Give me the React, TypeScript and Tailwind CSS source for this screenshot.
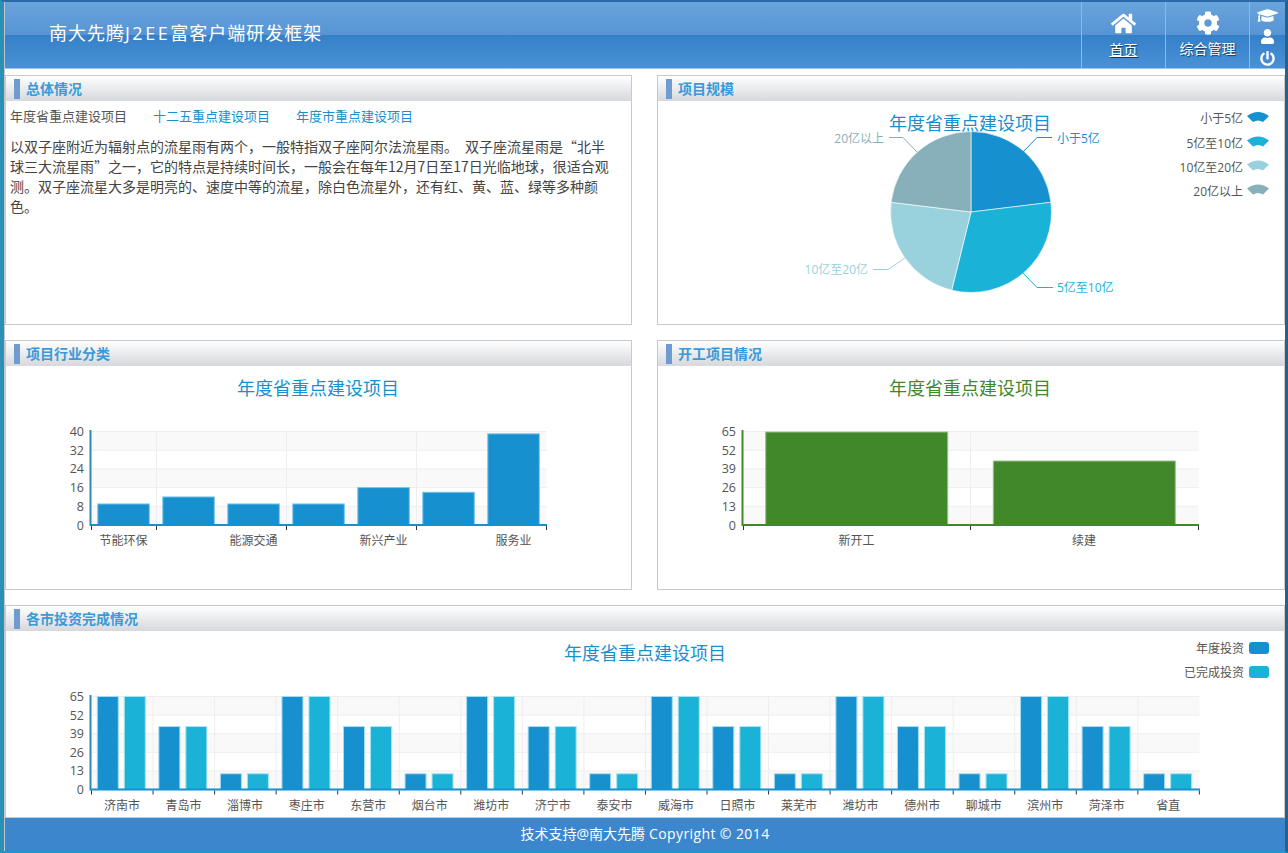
import type { ReactNode } from 'react';
import { FaHome, FaCog, FaGraduationCap, FaUser, FaPowerOff } from 'react-icons/fa';

const BLUE = '#1790cf';
const CYAN = '#1bb2d8';
const GREEN = '#408829';

const pieSlices = [
  { from: 0, to: 83.08, color: BLUE },
  { from: 83.08, to: 193.85, color: CYAN },
  { from: 193.85, to: 276.92, color: '#99d2dd' },
  { from: 276.92, to: 360, color: '#88b0bb' },
];

const pieLabels = [
  { text: '小于5亿', x: 1057, y: 143, anchor: 'start', color: BLUE, line: '1023,152 1037,137.5 1052,137.5' },
  { text: '5亿至10亿', x: 1057, y: 292, anchor: 'start', color: CYAN, line: '1023,273 1037,287.5 1053,287.5' },
  { text: '10亿至20亿', x: 868, y: 274, anchor: 'end', color: '#99d2dd', line: '905,258 888,269.5 873,269.5' },
  { text: '20亿以上', x: 884, y: 143, anchor: 'end', color: '#88b0bb', line: '917,152 903,137.5 889,137.5' },
];

const pieLegend = [
  { text: '小于5亿', y: 119, color: BLUE },
  { text: '5亿至10亿', y: 143.5, color: CYAN },
  { text: '10亿至20亿', y: 167.5, color: '#99d2dd' },
  { text: '20亿以上', y: 191.5, color: '#88b0bb' },
];

const cities = ['济南市', '青岛市', '淄博市', '枣庄市', '东营市', '烟台市', '潍坊市', '济宁市', '泰安市', '威海市', '日照市', '莱芜市', '潍坊市', '德州市', '聊城市', '滨州市', '菏泽市', '省直'];
const cityValues = cities.map((_, i) => [65, 44, 11][i % 3]);

function slicePath(cx: number, cy: number, r: number, from: number, to: number) {
  const p = (a: number) => {
    const rad = (a * Math.PI) / 180;
    return `${cx + r * Math.sin(rad)},${cy - r * Math.cos(rad)}`;
  };
  const large = to - from > 180 ? 1 : 0;
  return `M${cx},${cy} L${p(from)} A${r},${r} 0 ${large} 1 ${p(to)} Z`;
}

interface PlotProps {
  x0: number;
  x1: number;
  top: number;
  bottom: number;
  yLabels: string[];
  ticks: number[];
  color: string;
  axisColor: string;
  children: ReactNode;
}

// grid, bands and axes shared by the three bar charts
const Plot = ({ x0, x1, top, bottom, yLabels, ticks, color, axisColor, children }: PlotProps) => {
  const band = (bottom - top) / 5;
  return (
    <g>
      {[0, 2, 4].map((i) => (
        <rect key={i} x={x0} y={top + band * i} width={x1 - x0} height={band} fill="#f9f9f9" />
      ))}
      {[0, 1, 2, 3, 4].map((i) => (
        <line key={i} x1={x0} x2={x1} y1={top + band * i} y2={top + band * i} stroke="#eeeeee" />
      ))}
      {ticks.slice(1, -1).map((t) => (
        <line key={t} x1={t} x2={t} y1={top} y2={bottom} stroke="#eeeeee" />
      ))}
      {yLabels.map((l, i) => (
        <text key={l} x={x0 - 7.5} y={top + band * i + 4.5} textAnchor="end" fontSize="12.5" fill="#555555">
          {l}
        </text>
      ))}
      {children}
      <line x1={x0 - 1} x2={x1 + 0.5} y1={bottom} y2={bottom} stroke={color} strokeWidth="2" />
      <line x1={x0 - 1} x2={x0 - 1} y1={top - 1.5} y2={bottom + 1} stroke={axisColor} strokeWidth="2" />
      {ticks.map((t) => (
        <line key={t} x1={t} x2={t} y1={bottom + 1} y2={bottom + 5} stroke="#333333" />
      ))}
    </g>
  );
};

const Panel = ({ title, children, className = '' }: { title: string; children: ReactNode; className?: string }) => (
  <div className={`border border-[#c9c9c9] bg-white flex flex-col min-h-0 ${className}`}>
    <div className="h-[25px] shrink-0 flex items-center gap-[6px] pl-2 bg-[linear-gradient(to_bottom,#ffffff,#d6d8dc)]">
      <span className="w-[6px] h-[20px] bg-[#6f9bd1]" />
      <h3 className="text-[14px] font-bold text-[#3a9ad9] font-['Noto_Sans_CJK_SC',sans-serif]">{title}</h3>
    </div>
    <div className="flex-1 min-h-0 relative">{children}</div>
  </div>
);

const NavItem = ({ icon, label, underline }: { icon: ReactNode; label: string; underline?: boolean }) => (
  <a className="w-[84px] border-l border-[#8fb8e3] flex flex-col items-center pt-[9px] text-white">
    {icon}
    <span className={`mt-[4px] text-[14px] leading-[20px] [text-shadow:1px_1px_1px_#123a66] ${underline ? 'underline' : ''}`}>
      {label}
    </span>
  </a>
);

export default function App() {
  const tick7 = [91.5, 156.5, 286.5, 416.5, 546.5];
  const sectorValues = [9, 12, 9, 9, 16, 14, 39];
  const tick18 = Array.from({ length: 19 }, (_, i) => 91.5 + i * 61.55);

  return (
    <div className="w-[1288px] h-[853px] overflow-hidden bg-white border-l-4 border-r-[3px] border-t-2 border-b-2 border-l-[#2b90b6] border-r-[#21628f] border-t-[#2a6aa8] border-b-[#1b9ad0] font-['Open_Sans','Noto_Sans_CJK_SC',sans-serif]">
      <div className="h-full flex flex-col border-l border-[#c2c6ca]">
        <header className="h-[67px] shrink-0 flex justify-between border-b border-[#9cc3ea] bg-[linear-gradient(to_bottom,#6aa4dc_0%,#5794d4_50%,#3580c8_50%,#4a91d7_100%)]">
          <h1 className="pl-[44px] pt-[18px] text-[18px] leading-[26px] tracking-[1px] text-white">
            南大先腾<span className="tracking-[2.5px]">J2EE</span>富客户端研发框架
          </h1>
          <nav className="flex">
            <NavItem icon={<FaHome size={25} />} label="首页" underline />
            <NavItem icon={<FaCog size={24} />} label="综合管理" />
            <div className="w-[36px] border-l border-[#8fb8e3] flex flex-col items-center pt-[3px] text-white">
              <FaGraduationCap size={21} />
              <FaUser size={15} className="mt-[3px]" />
              <FaPowerOff size={15} className="mt-[7px]" />
            </div>
          </nav>
        </header>

        <main className="flex-1 min-h-0 flex flex-col pt-[6px] gap-[15px]">
          <div className="grid grid-cols-[627px_628px] gap-x-[25px] gap-y-[15px] grid-rows-[250px_250px] shrink-0">
            <Panel title="总体情况">
              <div className="px-[4px] pt-[5px] text-[13px] text-[#444444] font-['Noto_Sans_CJK_SC',sans-serif]">
                <div className="flex gap-[26px] leading-[20px]">
                  <span className="text-[#555555]">年度省重点建设项目</span>
                  <a className="text-[#1790cf]">十二五重点建设项目</a>
                  <a className="text-[#1790cf]">年度市重点建设项目</a>
                </div>
                <p className="mt-[10px] w-[604px] text-[14px] leading-[20px]">
                  以双子座附近为辐射点的流星雨有两个，一般特指双子座阿尔法流星雨。　双子座流星雨是“北半球三大流星雨”之一，它的特点是持续时间长，一般会在每年12月7日至17日光临地球，很适合观测。双子座流星大多是明亮的、速度中等的流星，除白色流星外，还有红、黄、蓝、绿等多种颜色。
                </p>
              </div>
            </Panel>

            <Panel title="项目规模">
              <svg width="626" height="223" viewBox="658 101 626 223" className="block">
                {pieSlices.map((s) => (
                  <path key={s.color} d={slicePath(971, 212, 80.5, s.from, s.to)} fill={s.color} stroke="#ffffff" strokeWidth="0.6" />
                ))}
                <text x="970" y="130" textAnchor="middle" fontSize="18" fill={BLUE}>年度省重点建设项目</text>
                {pieLabels.map((l) => (
                  <g key={l.text}>
                    <polyline points={l.line} fill="none" stroke={l.color} />
                    <text x={l.x} y={l.y} textAnchor={l.anchor as 'start' | 'end'} fontSize="12" fill={l.color}>{l.text}</text>
                  </g>
                ))}
                {pieLegend.map((l) => (
                  <g key={l.text}>
                    <text x="1243" y={l.y + 4} textAnchor="end" fontSize="12" fill="#555555">{l.text}</text>
                    <path
                      d={`M1247,${l.y - 3} Q1258,${l.y - 11} 1269,${l.y - 3} L1263,${l.y + 3} Q1258,${l.y} 1253,${l.y + 3} Z`}
                      fill={l.color}
                    />
                  </g>
                ))}
              </svg>
            </Panel>

            <Panel title="项目行业分类">
              <svg width="625" height="223" viewBox="6 366 625 223" className="block">
                <text x="318" y="395" textAnchor="middle" fontSize="18" fill={BLUE}>年度省重点建设项目</text>
                <Plot x0={91.5} x1={546.5} top={431.5} bottom={525} yLabels={['40', '32', '24', '16', '8', '0']} ticks={tick7} color={BLUE} axisColor="#2b8ab5">
                  {sectorValues.map((v, i) => (
                    <rect key={i} x={97.8 + i * 65} y={525 - (v * 93.5) / 40} width={51.5} height={(v * 93.5) / 40} fill={BLUE} stroke="#7cc3e6" />
                  ))}
                </Plot>
                {[
                  ['节能环保', 123.5],
                  ['能源交通', 253.5],
                  ['新兴产业', 383.5],
                  ['服务业', 513.5],
                ].map(([t, x]) => (
                  <text key={t} x={x} y="545" textAnchor="middle" fontSize="12" fill="#555555">{t}</text>
                ))}
              </svg>
            </Panel>

            <Panel title="开工项目情况">
              <svg width="626" height="223" viewBox="658 366 626 223" className="block">
                <text x="970" y="395" textAnchor="middle" fontSize="18" fill={GREEN}>年度省重点建设项目</text>
                <Plot x0={743.5} x1={1198.5} top={431.5} bottom={525} yLabels={['65', '52', '39', '26', '13', '0']} ticks={[743.5, 970.5, 1198.5]} color={GREEN} axisColor={GREEN}>
                  <rect x={765.7} y={432} width={182} height={93} fill={GREEN} stroke="#9cc08f" />
                  <rect x={993.3} y={461} width={182} height={64} fill={GREEN} stroke="#9cc08f" />
                </Plot>
                <text x="856.5" y="545" textAnchor="middle" fontSize="12" fill="#555555">新开工</text>
                <text x="1084" y="545" textAnchor="middle" fontSize="12" fill="#555555">续建</text>
              </svg>
            </Panel>
          </div>

          <Panel title="各市投资完成情况" className="flex-1">
            <svg width="1278" height="187" viewBox="6 631 1278 187" className="block">
              <text x="645" y="660" textAnchor="middle" fontSize="18" fill={BLUE}>年度省重点建设项目</text>
              <text x="1244" y="652.5" textAnchor="end" fontSize="12" fill="#555555">年度投资</text>
              <rect x="1249" y="642" width="20" height="12" rx="3" fill={BLUE} />
              <text x="1244" y="676.5" textAnchor="end" fontSize="12" fill="#555555">已完成投资</text>
              <rect x="1249" y="666" width="20" height="12" rx="3" fill={CYAN} />
              <Plot x0={91.5} x1={1199.5} top={696.5} bottom={789.5} yLabels={['65', '52', '39', '26', '13', '0']} ticks={tick18} color={BLUE} axisColor="#2b8ab5">
                {cityValues.map((v, i) => {
                  const h = (v * 93) / 65;
                  return (
                    <g key={i}>
                      <rect x={97.3 + i * 61.55} y={789.5 - h} width={21} height={h} fill={BLUE} stroke="#a5dcef" />
                      <rect x={124.3 + i * 61.55} y={789.5 - h} width={21} height={h} fill={CYAN} stroke="#a5e4f2" />
                    </g>
                  );
                })}
              </Plot>
              {cities.map((c, i) => (
                <text key={i} x={122 + i * 61.55} y="810" textAnchor="middle" fontSize="12" fill="#555555">{c}</text>
              ))}
            </svg>
          </Panel>
        </main>

        <footer className="h-[33px] shrink-0 bg-[#3b86cc] flex items-center justify-center gap-[4px] pb-[2px] text-[14px] text-white">
          <span>技术支持@南大先腾</span>
          <span className="tracking-[0.4px]">Copyright © 2014</span>
        </footer>
      </div>
    </div>
  );
}
